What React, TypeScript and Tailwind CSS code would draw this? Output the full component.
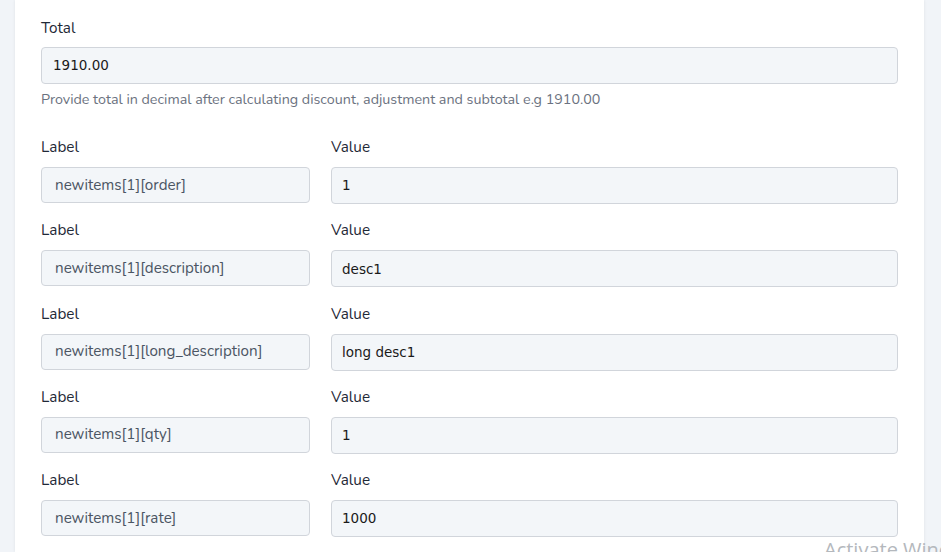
import React from "react";

const rows = [
  { label: "newitems[1][order]", value: "1" },
  { label: "newitems[1][description]", value: "desc1" },
  { label: "newitems[1][long_description]", value: "long desc1" },
  { label: "newitems[1][qty]", value: "1" },
  { label: "newitems[1][rate]", value: "1000" },
];

const uiFont = { fontFamily: '"Nunito", "Lato", "Open Sans", sans-serif' };
const inputFont = { fontFamily: '"DejaVu Sans", Tahoma, sans-serif' };

export default function App() {
  return (
    <div className="relative w-[941px] h-[552px] overflow-hidden bg-[#f1f4f8] flex">
      <div className="ml-[15px] w-[909px] bg-white shadow-[0_0_3px_rgba(0,0,0,0.08)] pt-[18px] px-[26px]" style={uiFont}>
        <div className="text-[15.3px] text-[#1f2937] leading-[21px]">Total</div>
        <div className="mt-[8px] h-[37px] w-[857px] rounded-[4px] border border-[#d1d5db] bg-[#f3f6f9] flex items-center pl-[11px] text-[13.5px] text-[#1a1a1a] " style={inputFont}>
          1910.00
        </div>
        <div className="mt-[7px] text-[14.3px] text-[#6b7280] leading-[18px]">
          Provide total in decimal after calculating discount, adjustment and subtotal e.g 1910.00
        </div>
        <div className="mt-[28px] flex flex-col gap-[16.25px]">
          {rows.map((r, i) => (
            <div key={i} className="flex gap-[21px]">
              <div className="w-[269px]">
                <div className="text-[15.3px] text-[#1f2937] leading-[20px]">Label</div>
                <div className="mt-[10px] h-[36px] rounded-[4px] border border-[#d1d5db] bg-[#f3f6f9] flex items-center pl-[13px] text-[15.2px] text-[#4b5563]">
                  {r.label}
                </div>
              </div>
              <div className="w-[567px]">
                <div className="text-[15.3px] text-[#1f2937] leading-[20px]">Value</div>
                <div className="mt-[10px] h-[37px] rounded-[4px] border border-[#d1d5db] bg-[#f3f6f9] flex items-center pl-[10px] text-[13.5px] text-[#1a1a1a]" style={inputFont}>
                  {r.value}
                </div>
              </div>
            </div>
          ))}
        </div>
      </div>
      <div
        className="absolute left-[824px] top-[538px] text-[20px] leading-[24px] text-[#b4b8bd] whitespace-nowrap"
        style={{ fontFamily: '"Open Sans", "Noto Sans", sans-serif' }}
      >
        Activate Windows
      </div>
    </div>
  );
}
